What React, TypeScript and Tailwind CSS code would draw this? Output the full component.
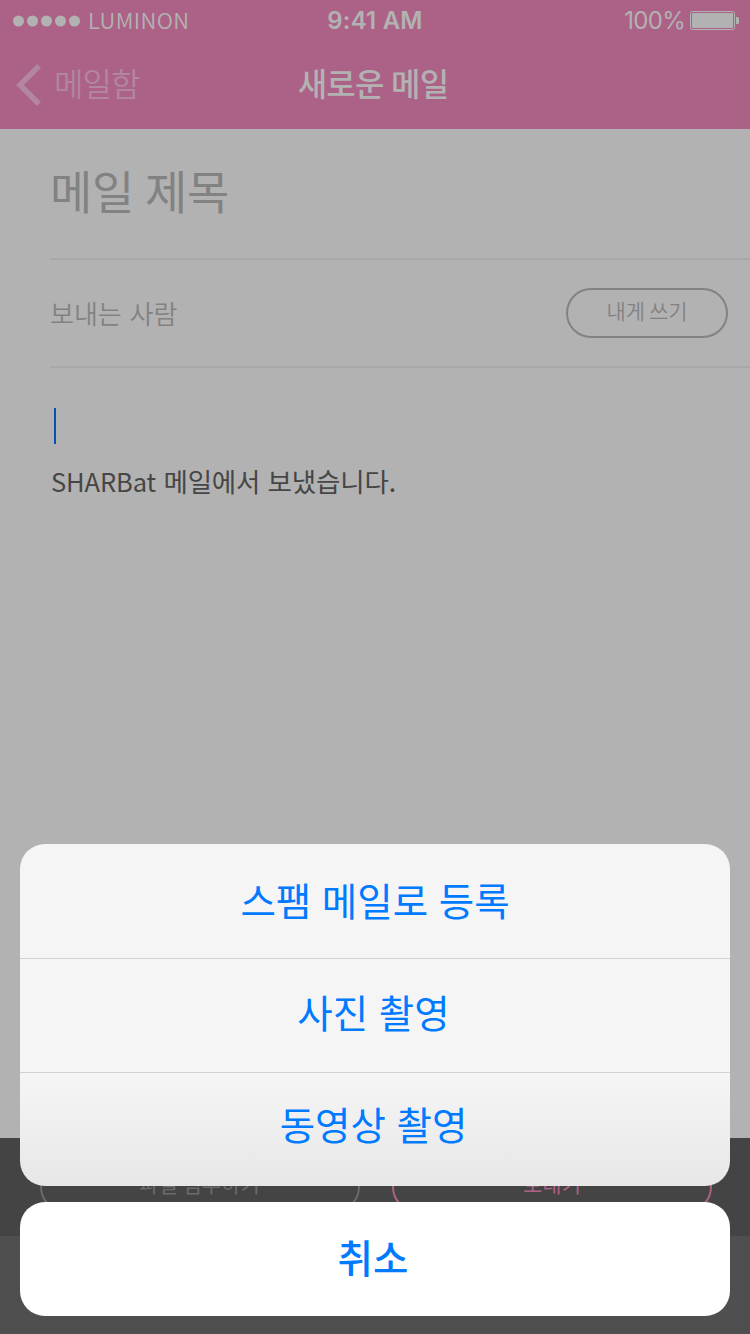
const actions = [
  { label: "스팸 메일로 등록", style: "pb-[2px]" },
  { label: "사진 촬영", style: "border-t border-[#d2d2d2] pb-[7px] pr-[3px]" },
  { label: "동영상 촬영", style: "border-t border-[#d2d2d2] pb-[11px] pr-[3px]" },
];

function StatusBar() {
  return (
    <div className="grid h-[41px] grid-cols-3 items-center font-['Inter',sans-serif] text-[#b2b2b2]">
      <div className="flex items-center pl-[13px]">
        <svg width="68" height="12" viewBox="0 0 68 12" fill="currentColor">
          <circle cx="5.5" cy="6" r="5.5" />
          <circle cx="19.5" cy="6" r="5.5" />
          <circle cx="33.5" cy="6" r="5.5" />
          <circle cx="47.5" cy="6" r="5.5" />
          <circle cx="61.5" cy="6" r="5.5" />
        </svg>
        <span className="ml-[7px] pb-[3px] font-['Noto_Sans_CJK_KR',sans-serif] text-[22px] leading-[38px] font-[350] tracking-[0.4px]">
          LUMINON
        </span>
      </div>
      <span className="text-center text-[24px] font-semibold tracking-[0.2px]">9:41 AM</span>
      <div className="flex items-center justify-end pr-[11px]">
        <span className="mr-[5px] text-[24px] tracking-[-0.7px]">100%</span>
        <svg width="49" height="19" viewBox="0 0 49 19" fill="currentColor">
          <rect x="0.5" y="0.5" width="44" height="18" rx="2" fill="none" stroke="currentColor" />
          <rect x="2" y="2" width="41" height="15" rx="1" />
          <path d="M46 6h1.500a1.500 1.500 0 0 1 1.500 1.500v4a1.500 1.500 0 0 1-1.500 1.500h-1.500z" />
        </svg>
      </div>
    </div>
  );
}

function Header() {
  return (
    <header className="h-[129px] bg-[#ac6287]">
      <StatusBar />
      <div className="grid h-[88px] grid-cols-3 items-center text-[32px] leading-[46px]">
        <div className="flex items-center pl-4 text-[#b2869c]">
          <svg width="26" height="42" viewBox="0 0 26 42" fill="none" stroke="currentColor" strokeWidth="5.500">
            <path d="M23 2L4 21L23 40" />
          </svg>
          <span className="ml-3 pb-[7px] font-[350] tracking-[-0.9px]">메일함</span>
        </div>
        <h1 className="pr-1 pb-[7px] text-center font-medium tracking-[-0.8px] text-[#b2b2b2] [word-spacing:1px]">
          새로운 메일
        </h1>
      </div>
    </header>
  );
}

function ActionSheet() {
  return (
    <div className="absolute inset-x-5 bottom-[18px] flex flex-col gap-4 text-[38.500px] text-[#007aff]">
      <div className="flex h-[342px] flex-col overflow-hidden rounded-[25px] bg-linear-to-b from-[#f5f5f5] from-68% to-[#e7e7e7]">
        {actions.map(({ label, style }) => (
          <button
            key={label}
            className={`flex h-[114px] w-full items-center justify-center [word-spacing:2px] ${style}`}
          >
            {label}
          </button>
        ))}
      </div>
      <button className="flex h-[114px] items-center justify-center rounded-[25px] bg-white pr-1 pb-1 font-medium">
        취소
      </button>
    </div>
  );
}

export default function App() {
  return (
    <div className="relative flex h-[1334px] w-[750px] flex-col overflow-hidden bg-[#b2b2b2] font-['Noto_Sans_CJK_KR',sans-serif] text-[#828282]">
      <Header />
      <main className="flex grow flex-col pl-[50px]">
        <div className="flex h-[131px] items-center border-b-2 border-[#a8a8a8] pb-[9px] text-[46px] tracking-[-0.3px] [word-spacing:1px]">
          메일 제목
        </div>
        <div className="flex h-[108px] items-center justify-between border-b-2 border-[#a8a8a8] pr-[22px]">
          <span className="pb-[2px] text-[26px] font-[350] [word-spacing:2px]">보내는 사람</span>
          <button className="flex h-[50px] w-[162px] items-center justify-center rounded-full border-2 border-[#828282] pb-1 text-[21px] font-[350] tracking-[-0.2px]">
            내게 쓰기
          </button>
        </div>
        <div className="mt-10 ml-1 h-9 w-0.5 bg-[#0055b2]" />
        <p className="mt-[17px] pl-px text-[26.500px] leading-10 tracking-[-0.150px] text-[#464646] [word-spacing:1.500px]">
          <span className="text-[25.500px] tracking-[-0.1px]">SHARBat</span> 메일에서 보냈습니다.
        </p>
      </main>
      <footer className="h-[196px] bg-[#4f4f4f]">
        <div className="flex h-[98px] items-center justify-center gap-8 bg-[#444444] pl-[2px] text-[21px]">
          <button className="flex h-[50px] w-[320px] items-center justify-center rounded-full border-2 border-[#6b6b6b] pr-px pb-[6px] text-[#6b6b6b]">
            파일 첨부하기
          </button>
          <button className="flex h-[50px] w-[320px] items-center justify-center rounded-full border-2 border-[#ac6287] pb-[6px] text-[#ac6287]">
            보내기
          </button>
        </div>
      </footer>
      <ActionSheet />
    </div>
  );
}
